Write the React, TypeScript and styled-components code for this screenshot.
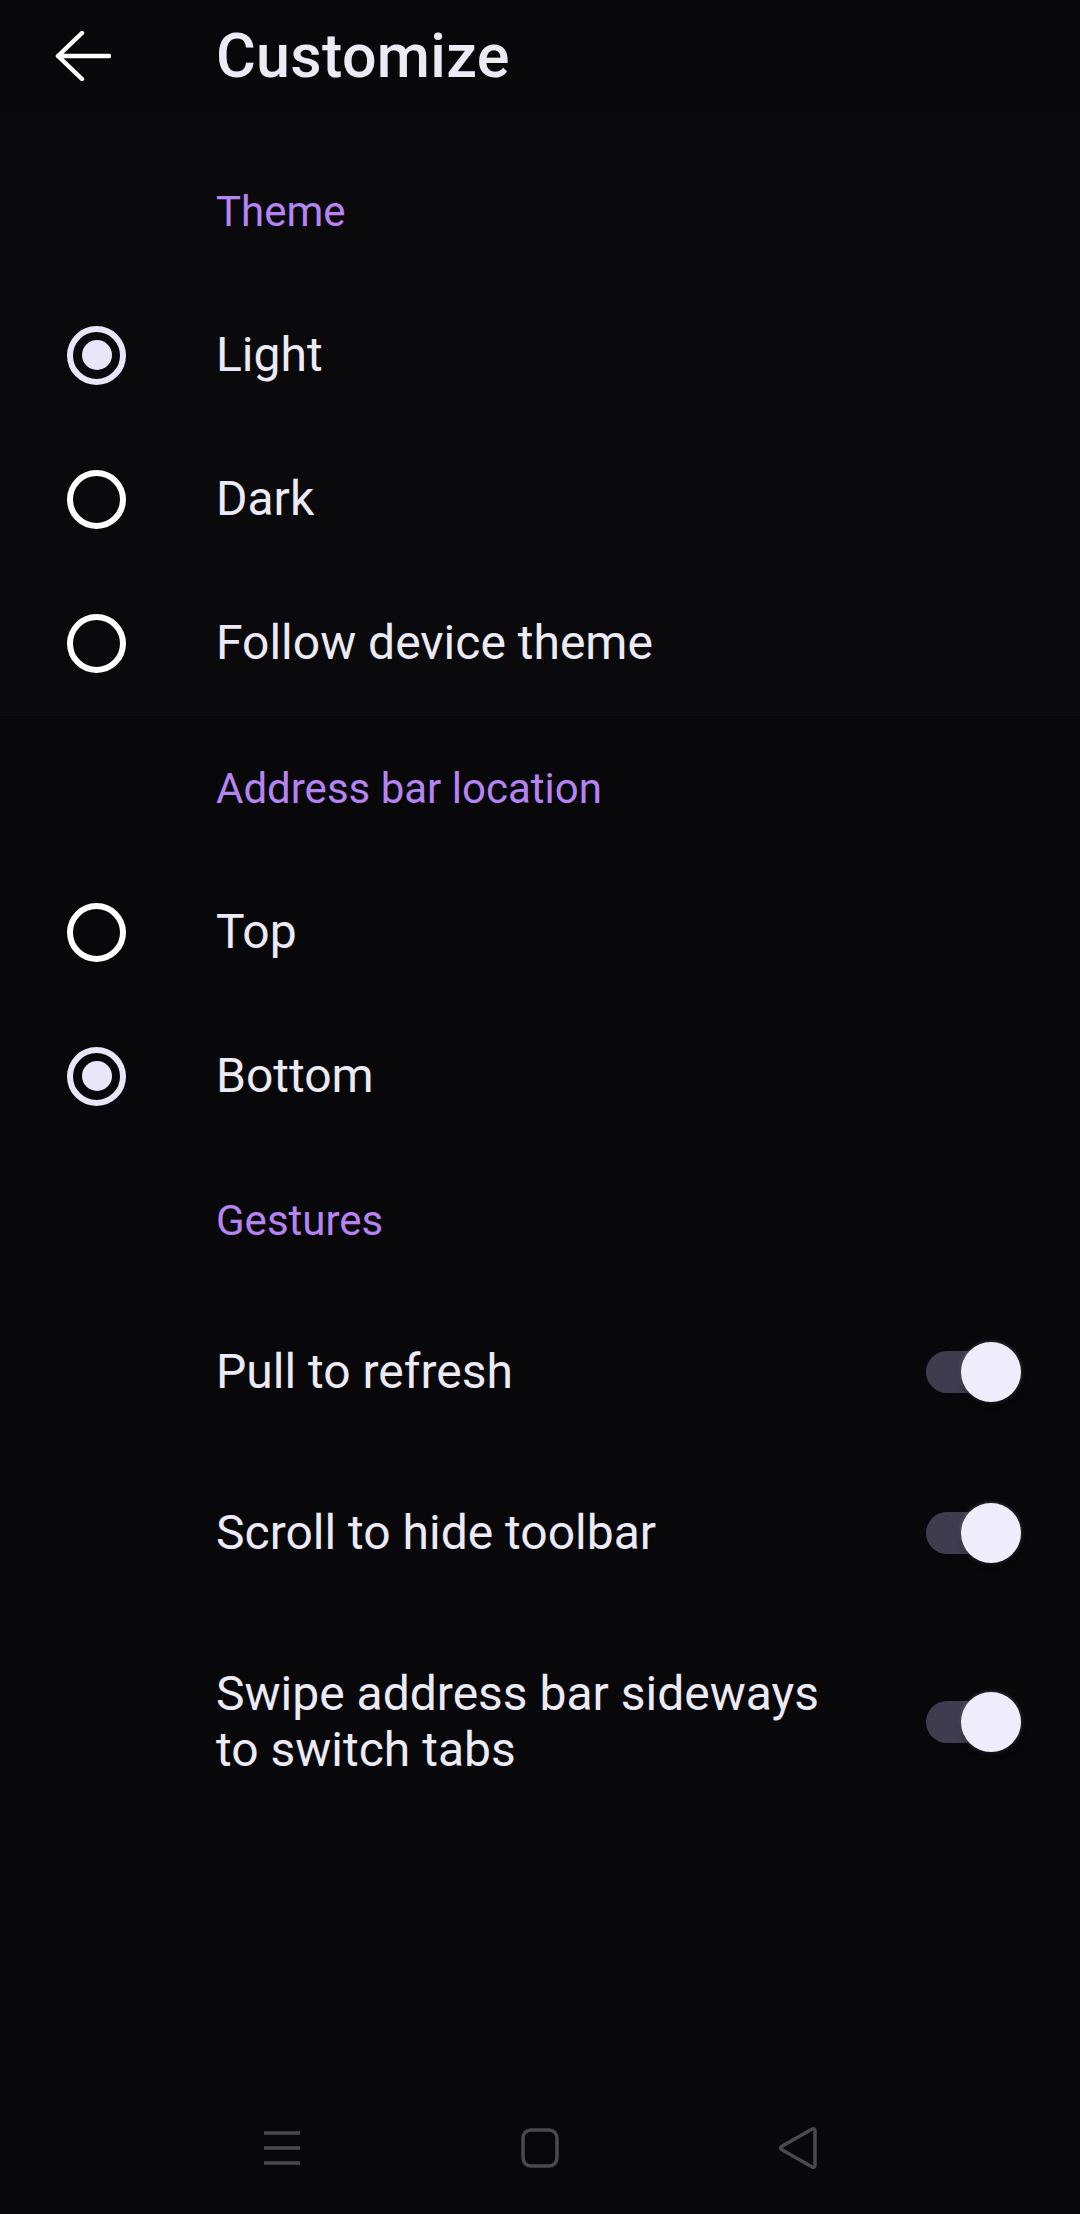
import React, { useState } from "react";
import styled, { createGlobalStyle } from "styled-components";

const Global = createGlobalStyle`
  html, body { margin: 0; padding: 0; background: #08080b; }
  * { box-sizing: border-box; }
  body { font-family: Roboto, "Noto Sans", "Liberation Sans", sans-serif; }
`;

const Page = styled.div`
  width: 1080px;
  height: 2214px;
  background: #08080b;
  display: flex;
  flex-direction: column;
  color: #eceaf4;
  overflow: hidden;
`;

const Toolbar = styled.header`
  height: 112px;
  display: flex;
  align-items: center;
  flex-shrink: 0;
`;

const BackButton = styled.button`
  width: 216px;
  height: 112px;
  display: flex;
  align-items: center;
  padding: 0 0 0 55px;
  margin: 0;
  border: 0;
  background: transparent;
  cursor: pointer;
`;

const Title = styled.h1`
  margin: 0;
  font-size: 61px;
  font-weight: 500;
  line-height: 1;
  color: #eceaf4;
  letter-spacing: 0.3px;
`;

const Content = styled.main`
  flex: 1;
  display: flex;
  flex-direction: column;
`;

const Section = styled.section<{ $divider?: boolean }>`
  display: flex;
  flex-direction: column;
  background: ${(p) => (p.$divider ? "#0a0a0d" : "transparent")};
  border-bottom: ${(p) => (p.$divider ? "1px solid #0e0e12" : "none")};
`;

const Category = styled.div<{ $top?: number }>`
  height: 144px;
  margin-top: ${(p) => p.$top ?? 0}px;
  display: flex;
  align-items: center;
  padding-left: 216px;
  font-size: 42px;
  color: #b584f2;
  font-weight: 400;
`;

const RadioRow = styled.label`
  height: 144px;
  display: flex;
  align-items: center;
  cursor: pointer;
`;

const RadioSlot = styled.span`
  width: 216px;
  display: flex;
  align-items: center;
  padding-left: 67px;
`;

const RadioCircle = styled.span<{ $checked: boolean }>`
  width: 59px;
  height: 59px;
  border-radius: 50%;
  border: 6px solid ${(p) => (p.$checked ? "#e8e6f8" : "#ffffff")};
  display: flex;
  align-items: center;
  justify-content: center;
  &::after {
    content: "";
    width: 30px;
    height: 30px;
    border-radius: 50%;
    background: #e8e6f8;
    display: ${(p) => (p.$checked ? "block" : "none")};
  }
`;

const Label = styled.span`
  font-size: 48px;
  line-height: 56px;
  color: #eceaf4;
`;

const SwitchRow = styled.div`
  display: flex;
  align-items: center;
  padding: 52px 59px 53px 216px;
  gap: 64px;
`;

const SwitchLabel = styled(Label)`
  flex: 1;
`;

const Track = styled.button<{ $on: boolean }>`
  position: relative;
  width: 95px;
  height: 42px;
  border-radius: 21px;
  background: #3f3c50;
  border: 0;
  padding: 0;
  margin: 0;
  flex-shrink: 0;
  cursor: pointer;
`;

const Thumb = styled.span<{ $on: boolean }>`
  position: absolute;
  top: -9px;
  left: ${(p) => (p.$on ? "35px" : "0px")};
  width: 60px;
  height: 60px;
  border-radius: 50%;
  background: #efecfc;
  box-shadow: 0 3px 5px rgba(0, 0, 0, 0.5), 0 0 4px rgba(255, 255, 255, 0.3);
`;

const NavBar = styled.nav`
  height: 120px;
  display: flex;
  align-items: center;
  justify-content: center;
  flex-shrink: 0;
  padding-bottom: 12px;
`;

const NavSlot = styled.div`
  width: 258px;
  display: flex;
  justify-content: center;
`;

function BackArrow() {
  return (
    <svg width="56" height="50" viewBox="0 0 56 50" fill="none">
      <path
        d="M54 25H3M27 2L3 25L27 48"
        stroke="#ffffff"
        strokeWidth="4.5"
        strokeLinecap="round"
        strokeLinejoin="round"
      />
    </svg>
  );
}

type RadioProps = { label: string; checked: boolean; onSelect: () => void };

function Radio({ label, checked, onSelect }: RadioProps) {
  return (
    <RadioRow onClick={onSelect}>
      <RadioSlot>
        <RadioCircle $checked={checked} />
      </RadioSlot>
      <Label>{label}</Label>
    </RadioRow>
  );
}

type ToggleProps = { label: React.ReactNode; on: boolean; onToggle: () => void };

function Toggle({ label, on, onToggle }: ToggleProps) {
  return (
    <SwitchRow>
      <SwitchLabel>{label}</SwitchLabel>
      <Track $on={on} onClick={onToggle} aria-pressed={on}>
        <Thumb $on={on} />
      </Track>
    </SwitchRow>
  );
}

export default function App() {
  const [theme, setTheme] = useState("light");
  const [bar, setBar] = useState("bottom");
  const [g, setG] = useState({ pull: true, scroll: true, swipe: true });

  return (
    <>
      <Global />
      <Page>
        <Toolbar>
          <BackButton aria-label="Back">
            <BackArrow />
          </BackButton>
          <Title>Customize</Title>
        </Toolbar>
        <Content>
          <Section $divider>
            <Category $top={27}>Theme</Category>
            <Radio label="Light" checked={theme === "light"} onSelect={() => setTheme("light")} />
            <Radio label="Dark" checked={theme === "dark"} onSelect={() => setTheme("dark")} />
            <Radio
              label="Follow device theme"
              checked={theme === "device"}
              onSelect={() => setTheme("device")}
            />
          </Section>
          <Section>
            <Category>Address bar location</Category>
            <Radio label="Top" checked={bar === "top"} onSelect={() => setBar("top")} />
            <Radio label="Bottom" checked={bar === "bottom"} onSelect={() => setBar("bottom")} />
          </Section>
          <Section>
            <Category>Gestures</Category>
            <Toggle label="Pull to refresh" on={g.pull} onToggle={() => setG({ ...g, pull: !g.pull })} />
            <Toggle
              label="Scroll to hide toolbar"
              on={g.scroll}
              onToggle={() => setG({ ...g, scroll: !g.scroll })}
            />
            <Toggle
              label="Swipe address bar sideways to switch tabs"
              on={g.swipe}
              onToggle={() => setG({ ...g, swipe: !g.swipe })}
            />
          </Section>
        </Content>
        <NavBar>
          <NavSlot>
            <svg width="40" height="36" viewBox="0 0 40 36" fill="none">
              <path d="M2 3H38M2 18H38M2 33H38" stroke="#4a4a4e" strokeWidth="3.5" />
            </svg>
          </NavSlot>
          <NavSlot>
            <svg width="38" height="40" viewBox="0 0 38 40" fill="none">
              <rect x="2" y="2" width="34" height="36" rx="8" stroke="#4a4a4e" strokeWidth="3.5" />
            </svg>
          </NavSlot>
          <NavSlot>
            <svg width="42" height="44" viewBox="0 0 42 44" fill="none">
              <path
                d="M38 4.5V39.5C38 41 36.5 41.8 35.2 41L4.5 23.5C3.3 22.8 3.3 21.2 4.5 20.5L35.2 3C36.5 2.2 38 3 38 4.5Z"
                stroke="#4a4a4e"
                strokeWidth="3.5"
                strokeLinejoin="round"
              />
            </svg>
          </NavSlot>
        </NavBar>
      </Page>
    </>
  );
}
